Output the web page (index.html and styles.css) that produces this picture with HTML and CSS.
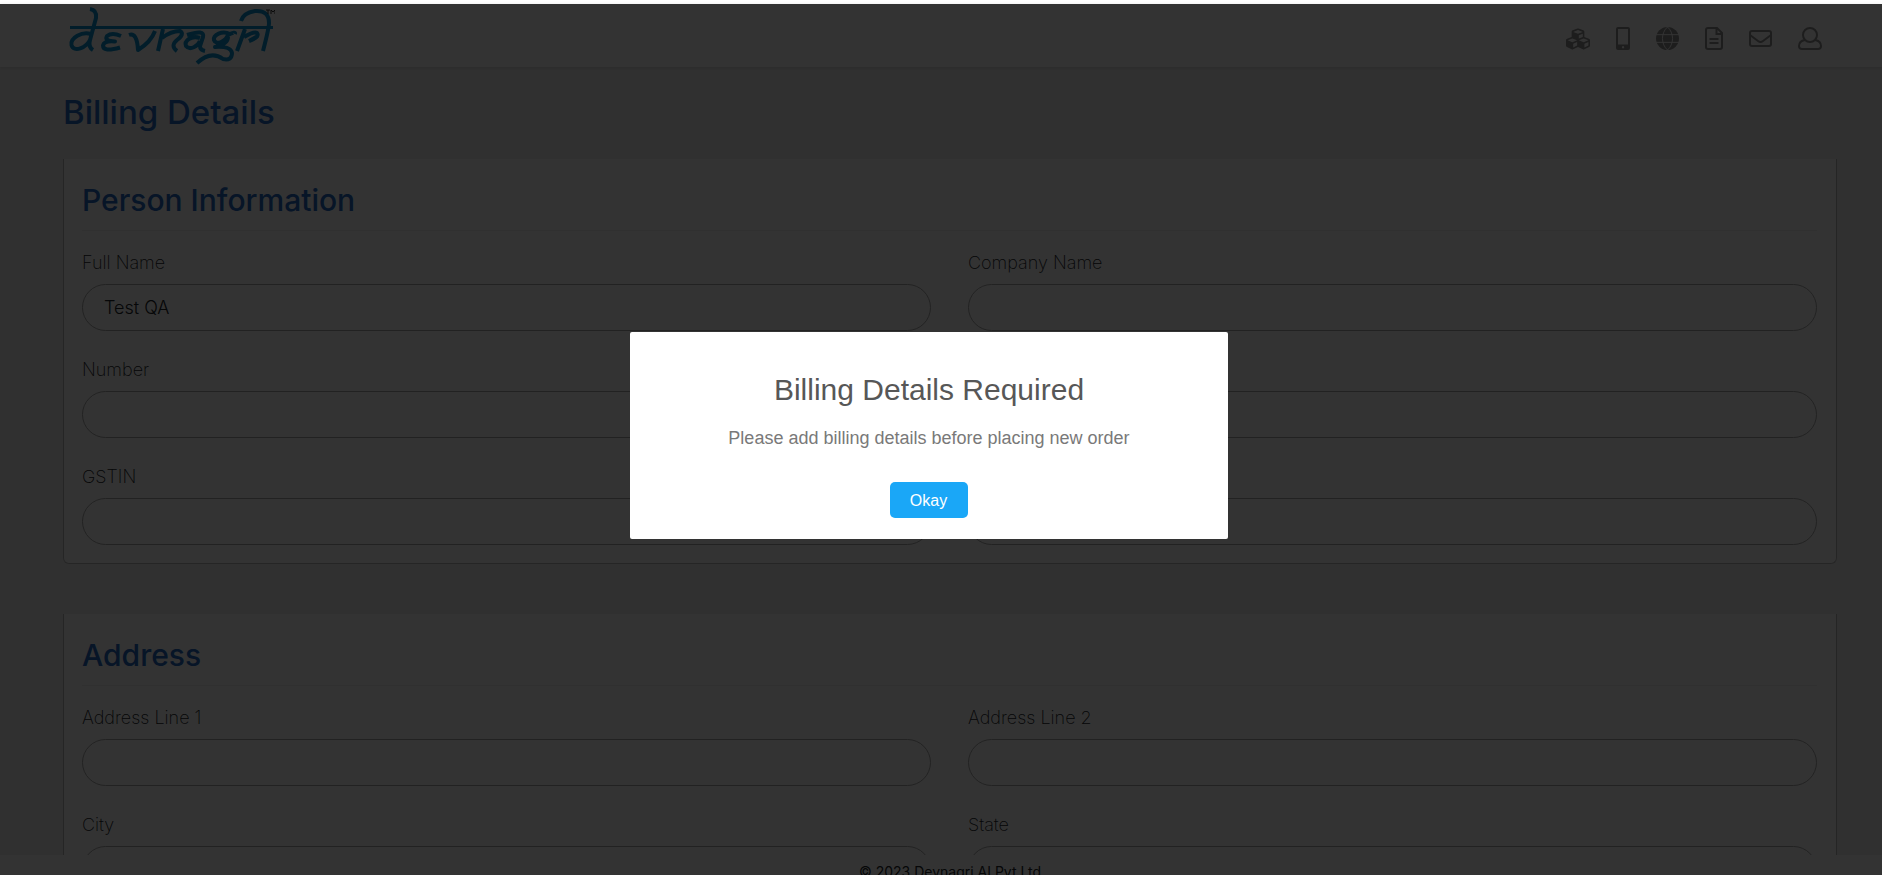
FILE: index.html
```html
<!DOCTYPE html>
<html lang="en">
<head>
<meta charset="utf-8">
<title>Billing Details</title>
<link rel="stylesheet" href="styles.css">
</head>
<body>
<div class="app">
<header class="topbar">
<a class="logo" href="#" aria-label="devnagri">
<svg width="208" height="62" viewBox="0 0 208 62" fill="none" stroke="#0a93d0" stroke-width="4" stroke-linecap="butt" stroke-linejoin="round">
<path d="M3 22.500H206" stroke-width="3"/>
<path d="M23 4q7 1 6 9L23 35q-2 7 3 10M24 29C15 26 3 33 4.500 40c2 8 15 3 19-6"/>
<path d="M54 31q-9-4-14 0q-3 5 8 5.500q-11-1-12 4q0 7 17 2"/>
<path d="M62 30q8-3 9 15q13-8 17-19"/>
<path d="M96 24L91 46M95 33q9-7 18-7q5 3-3 9q-7 6 0 11"/>
<path d="M120 30q18-6 16 2l-3 9q0 4 5 5M133 33c-9-3-16 3-14 8c4 5 12 0 14-5"/>
<path d="M163 29c-8-4-17 1-16 6c2 6 12 1 14-5q8-4 7-1M161 32q0 7-13 10q16-1 17 6q0 8-9 6q-12-9-26 4"/>
<path d="M178 24L170 46M177 32q10-6 13-4q3 4-8 8M174 16q2-8 14-10q14-1 14 12q0 5-6 28M182 36l9-5"/>
<path d="M199 5h4M201 5v4M204 9V5l2 2l2-2v4" stroke="#333" stroke-width="1"/>
</svg>
</a>
<nav class="tools" aria-label="Main">
<a href="#" aria-label="Services"><svg width="24" height="24" viewBox="0 0 512 512"><path class="solid" d="M488.600 250.200L392 214V105.500c0-15-9.300-28.400-23.400-33.700l-100-37.500c-8.100-3.100-17.100-3.100-25.300 0l-100 37.500c-14.100 5.300-23.400 18.700-23.400 33.700V214l-96.600 36.200C9.300 255.500 0 268.900 0 283.900V394c0 13.600 7.700 26.100 19.900 32.200l100 50c10.100 5.100 22.100 5.100 32.200 0l103.900-52 103.900 52c10.100 5.100 22.100 5.100 32.200 0l100-50c12.200-6.100 19.900-18.600 19.900-32.200V283.900c0-15-9.300-28.400-23.400-33.700zM358 214.800l-85 31.900v-68.200l85-37v73.300zM154 104.100l102-38.200 102 38.200v.6l-102 41.400-102-41.400v-.6zm84 291.100l-85 42.500v-79.100l85-38.800v75.400zm0-112l-102 41.400-102-41.400v-.6l102-38.200 102 38.200v.6zm240 112l-85 42.500v-79.100l85-38.800v75.400zm0-112l-102 41.400-102-41.400v-.6l102-38.200 102 38.200v.6z"/></svg></a>
<a href="#" aria-label="Mobile"><svg width="14" height="23" viewBox="0 0 14 23"><path class="solid" fill-rule="evenodd" d="M2 0h10q2 0 2 2v19q0 2-2 2H2q-2 0-2-2V2q0-2 2-2zM2 2v15.500h10V2zM7 19a1.200 1.200 0 1 0 .1 0z"/></svg></a>
<a href="#" aria-label="Language"><svg width="23" height="23" viewBox="0 0 24 24"><circle class="solid" cx="12" cy="12" r="12"/><path class="cut" d="M0 8h24M0 16h24M12 0C5 6 5 18 12 24M12 0c7 6 7 18 0 24"/></svg></a>
<a href="#" aria-label="Documents"><svg width="18" height="23" viewBox="0 0 18 23"><path class="line" d="M3 1h9l5 5v14q0 2-2 2H3q-2 0-2-2V3q0-2 2-2zM11.500 1v6H17M4.500 12h9M4.500 16h9"/></svg></a>
<a href="#" aria-label="Messages"><svg width="23" height="23" viewBox="0 0 23 23"><rect class="line" x="1" y="4" width="21" height="15" rx="2"/><path class="line" d="M1 8l8 6q2.500 2 5 0l8-6"/></svg></a>
<a href="#" aria-label="Account"><svg width="24" height="23" viewBox="0 0 24 23"><circle class="line" cx="12" cy="8" r="7"/><path class="line" d="M7 13q-6 1-6 6q0 3 3 3h16q3 0 3-3q0-5-6-6"/></svg></a>
</nav>
</header>
<main class="content">
<h1>Billing Details</h1>
<form>
<section class="card">
<h2>Person Information</h2>
<div class="fields">
<label>Full Name<input type="text" value="Test QA"></label>
<label>Company Name<input type="text"></label>
<label>Number<input type="text"></label>
<label>&nbsp;<input type="text"></label>
<label>GSTIN<input type="text"></label>
<label>&nbsp;<input type="text"></label>
</div>
</section>
<section class="card">
<h2>Address</h2>
<div class="fields">
<label>Address Line 1<input type="text"></label>
<label>Address Line 2<input type="text"></label>
<label>City<input type="text"></label>
<label>State<input type="text"></label>
</div>
</section>
</form>
</main>
<footer class="footer">© 2023 Devnagri AI Pvt Ltd</footer>
</div>
<div class="overlay">
<div class="dialog" role="dialog" aria-modal="true" aria-labelledby="dialog-title">
<h2 id="dialog-title">Billing Details Required</h2>
<p>Please add billing details before placing new order</p>
<button type="button">Okay</button>
</div>
</div>
</body>
</html>
```

FILE: styles.css
```css
* { box-sizing: border-box; }
html { background: #fff; }
body { margin: 0; font-family: Inter, sans-serif; overflow: hidden; }
.app {
  height: 100vh;
  padding-top: 4px;
  display: flex;
  flex-direction: column;
  color: #212529;
}
.topbar {
  position: relative;
  flex: none;
  height: 63px;
  padding: 0 60px 0 67px;
  display: flex;
  justify-content: space-between;
  align-items: center;
  background: #fff;
  box-shadow: 0 1px 4px rgba(0, 0, 0, .12);
}
.logo, .tools a { display: flex; }
.tools { display: flex; align-items: center; gap: 26px; padding-top: 6px; }
.solid { fill: #909090; }
.line { fill: none; stroke: #909090; stroke-width: 2; }
.cut { fill: none; stroke: #fff; stroke-width: 1; }
.content {
  flex: 1;
  min-height: 0;
  overflow: hidden;
  padding: 25px 45px 0 63px;
  background: #f0f0f0;
}
h1, h2 { margin: 0; font-weight: 500; }
h1 { color: #2468c4; font-size: 33px; line-height: 40px; }
.card {
  margin-top: 27px;
  padding: 23px 19px 18px 18px;
  background: #fff;
  border: 1px solid #bbb;
  border-top: 0;
  border-radius: 0 0 6px 6px;
}
.card + .card { margin-top: 50px; }
.card h2 {
  padding-bottom: 12px;
  border-bottom: 1px solid #f0f0f0;
  color: #2468c4;
  font-size: 30px;
  line-height: 36px;
}
.fields {
  padding-top: 18px;
  display: grid;
  grid-template-columns: 1fr 1fr;
  gap: 25px 37px;
}
.fields label {
  display: flex;
  flex-direction: column;
  gap: 8px;
  font-size: 18px;
  font-weight: 200;
  line-height: 27px;
}
.fields input {
  width: 100%;
  height: 47px;
  padding: 0 21px;
  border: 1px solid #aaa;
  border-radius: 24px;
  background: #fff;
  color: #212529;
  font: 300 18px Inter, sans-serif;
}
.footer {
  flex: none;
  height: 20px;
  padding: 7px 0 0 18px;
  overflow: hidden;
  background: #fff;
  font-size: 14px;
  line-height: 20px;
  text-align: center;
}
.overlay {
  position: fixed;
  inset: 4px 0 0;
  padding: 0 24px 8px 0;
  display: flex;
  align-items: center;
  justify-content: center;
  background: rgba(0, 0, 0, .8);
}
.dialog {
  width: 598px;
  padding: 38px 24px 21px;
  border-radius: 2px;
  background: #fff;
  font-family: "Liberation Sans", Arial, sans-serif;
  text-align: center;
}
.dialog h2 { color: #575757; font-size: 30px; font-weight: 400; line-height: 40px; }
.dialog p { margin: 16px 0 32px; color: #797979; font-size: 18px; line-height: 24px; }
.dialog button {
  height: 36px;
  padding: 1px 21px 0 20px;
  border: 0;
  border-radius: 5px;
  background: #1aa7f7;
  color: #fff;
  font: 16px "Liberation Sans", Arial, sans-serif;
}
```
